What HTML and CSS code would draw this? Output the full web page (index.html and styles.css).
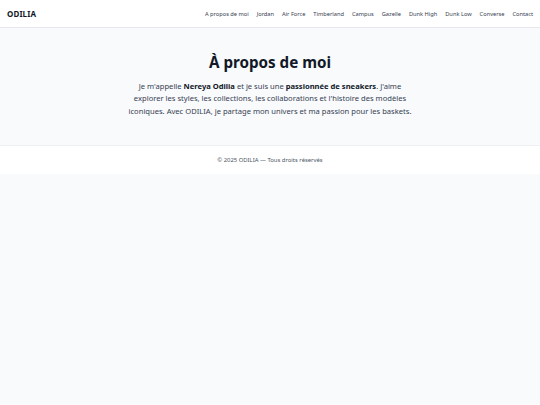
FILE: index.html
```html
<!DOCTYPE html>
<html lang="fr">
<head>
<meta charset="utf-8">
<title>ODILIA — À propos de moi</title>
<link rel="stylesheet" href="styles.css">
</head>
<body>
<header class="site-header">
  <div class="logo">ODILIA</div>
  <nav class="nav">
    <a href="#">A propos de moi</a>
    <a href="#">Jordan</a>
    <a href="#">Air Force</a>
    <a href="#">Timberland</a>
    <a href="#">Campus</a>
    <a href="#">Gazelle</a>
    <a href="#">Dunk High</a>
    <a href="#">Dunk Low</a>
    <a href="#">Converse</a>
    <a href="#">Contact</a>
  </nav>
</header>
<main class="about">
  <h1 class="title">À propos de moi</h1>
  <p class="text">Je m'appelle <strong>Nereya Odilia</strong> et je suis une <strong>passionnée de sneakers</strong>. J'aime explorer les styles, les collections, les collaborations et l'histoire des modèles iconiques. Avec ODILIA, je partage mon univers et ma passion pour les baskets.</p>
</main>
<footer class="site-footer">© 2025 ODILIA — Tous droits réservés</footer>
</body>
</html>
```
FILE: styles.css
```css
* { box-sizing: border-box; }
html, body { margin: 0; padding: 0; }
body {
  background: #f8fafc;
  font-family: "Noto Sans", "Open Sans", sans-serif;
  color: #111827;
}
.site-header {
  background: #ffffff;
  border-bottom: 1px solid #e5e7eb;
  height: 28px;
  display: flex;
  align-items: center;
  justify-content: space-between;
  padding: 0 7px 0 7px;
}
.logo {
  font-weight: 700;
  font-size: 8px;
  letter-spacing: 0.1px;
  color: #111827;
}
.nav {
  display: flex;
  gap: 7.9px;
}
.nav a {
  font-size: 5.7px;
  color: #374151;
  text-decoration: none;
}
.about {
  padding: 25px 16px 28px;
  text-align: center;
}
.title {
  margin: 0 0 9px;
  font-size: 15.2px;
  font-weight: 700;
  color: #111827;
  line-height: 18px;
}
.text {
  margin: 0 auto;
  max-width: 292px;
  font-size: 7.6px;
  line-height: 12.3px;
  color: #374151;
}
.text strong { color: #111827; font-weight: 700; }
.site-footer {
  background: #ffffff;
  border-top: 1px solid #eef0f3;
  height: 29px;
  display: flex;
  align-items: center;
  justify-content: center;
  font-size: 5.9px;
  color: #4b5563;
}
```
